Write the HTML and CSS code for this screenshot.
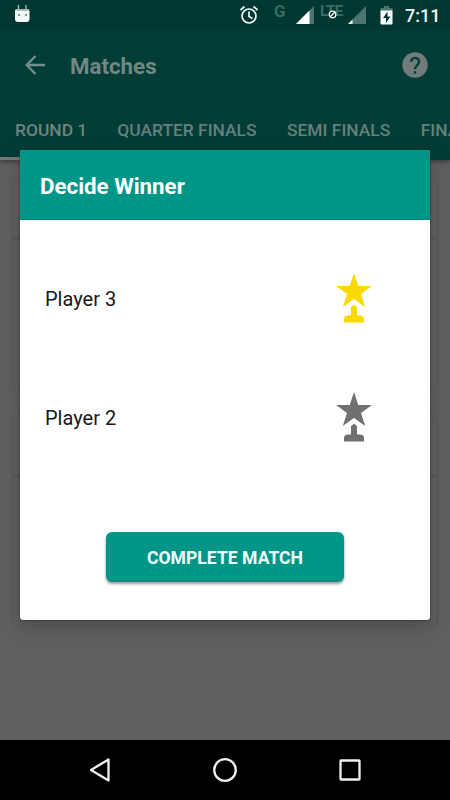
FILE: index.html
```html
<!DOCTYPE html>
<html lang="en">
<head>
<meta charset="utf-8">
<title>Matches</title>
<link rel="stylesheet" href="styles.css">
</head>
<body>
<div class="screen">
  <header class="top">
    <div class="status">
      <svg class="robot" width="16" height="18" viewBox="0 0 16 18"><path d="M4.500 0v4M12 0v4" stroke="#b5cbc8" stroke-width="1.200"/><path d="M1 6q0-2 2-2h10q2.500 0 2.500 2v8q0 3-3 3H4q-3 0-3-3z" fill="#f2fafa"/><path d="M2.500 4h12v2h-12z" fill="#a9bbb9"/><circle cx="5" cy="10" r="1.100" fill="#6b7c7a"/><circle cx="12" cy="10" r="1.100" fill="#6b7c7a"/></svg>
      <svg class="alarm" width="20" height="20" viewBox="0 0 20 20" fill="none" stroke="#eef7f6" stroke-width="1.700"><circle cx="10" cy="11" r="7"/><path d="M10 6.500v5l3.500 2M1.500 5l4-3.500M18.500 5l-4-3.500"/></svg>
      <span class="net net-g">G</span>
      <svg class="signal" width="20" height="19" viewBox="0 0 20 19"><path d="M19 0v18H1z" fill="#4b7570"/><path d="M14.500 4.500V18H1z" fill="#fff"/></svg>
      <span class="net net-lte">LTE<svg class="blocked" width="9" height="9" viewBox="0 0 9 9" fill="none" stroke="#fff" stroke-width="1.300"><circle cx="4.500" cy="4.500" r="3.300" fill="#003731"/><path d="M2.300 6.700l4.400-4.400"/></svg></span>
      <svg class="signal" width="20" height="19" viewBox="0 0 20 19"><path d="M19 0v18H1z" fill="#4b7570"/><path d="M5.500 13.500V18H1z" fill="#fff"/></svg>
      <svg class="battery" width="13" height="19" viewBox="0 0 13 19"><path d="M4 0h5v2h3.500v3H.5V2H4z" fill="#4b7570"/><path d="M.5 4.500h12v13q0 1-1 1h-10q-1 0-1-1z" fill="#fff"/><path d="M7.500 5.500L3 12h3v5l4.500-6.500h-3z" fill="#003731"/></svg>
      <time>7:11</time>
    </div>
    <div class="bar">
      <svg width="20" height="20" viewBox="0 0 20 20" fill="none" stroke="#738f8b" stroke-width="2.300"><path d="M20 10H2M10.500 1L1.600 10l8.900 9"/></svg>
      <h1>Matches</h1>
      <svg class="help" width="26" height="26" viewBox="0 0 26 26"><circle cx="13" cy="13" r="12.700" fill="#747c7b"/><path d="M9.200 9.800a3.900 3.900 0 1 1 6.600 2.800c-1.500 1.500-2.800 2.200-2.800 4.600" fill="none" stroke="#003d36" stroke-width="2.400"/><path d="M11.800 19.300h2.400v2.400h-2.400z" fill="#003d36"/></svg>
    </div>
    <nav class="tabs"><span class="active">ROUND 1</span><span>QUARTER FINALS</span><span>SEMI FINALS</span><span>FINALS</span></nav>
  </header>
  <main class="content">
    <section class="card"><div class="card-head"></div></section>
    <section class="card"><div class="card-head"></div></section>
  </main>
  <footer class="navbar">
    <svg width="22" height="26" viewBox="0 0 22 26"><path d="M2 13L19.500 2.500v21z"/></svg>
    <svg width="26" height="26" viewBox="0 0 26 26"><circle cx="13" cy="13" r="10.800"/></svg>
    <svg width="22" height="26" viewBox="0 0 22 26"><rect x="1.500" y="3.500" width="19" height="19" rx=".5"/></svg>
  </footer>
  <div class="dialog">
    <h2>Decide Winner</h2>
    <div class="players">
      <div class="player"><span>Player 3</span><svg class="trophy gold" width="36" height="50" viewBox="0 0 36 50"><path d="M18 0l4.300 13H36L25 21.100 29.200 34 18 26 6.800 34 11 21.100 0 13h13.700zM8 49.500V46q0-3.500 4-3.500h3V34l3-2.200 3 2.200v8.500h3q4 0 4 3.500v3.500z"/></svg></div>
      <div class="player"><span>Player 2</span><svg class="trophy" width="36" height="50" viewBox="0 0 36 50"><path d="M18 0l4.300 13H36L25 21.100 29.200 34 18 26 6.800 34 11 21.100 0 13h13.700zM8 49.500V46q0-3.500 4-3.500h3V34l3-2.200 3 2.200v8.500h3q4 0 4 3.500v3.500z"/></svg></div>
    </div>
    <button class="complete">COMPLETE MATCH</button>
  </div>
</div>
</body>
</html>
```
FILE: styles.css
```css
* { box-sizing: border-box; }
body { margin: 0; font-family: Roboto, "Liberation Sans", sans-serif; }
.screen { position: relative; display: flex; flex-direction: column; width: 450px; height: 800px; overflow: hidden; background: #606060; }
.top { display: flex; flex-direction: column; height: 160px; background: #003d36; box-shadow: 0 2px 5px rgba(0,0,0,.4); z-index: 1; }
.status { display: flex; align-items: flex-start; height: 30px; padding: 5px 11px 0 14px; background: #003731; color: #eef7f6; }
.robot { margin-right: auto; }
.net { font-size: 15px; font-weight: 700; line-height: 16px; color: #3b6a64; margin-top: -2px; }
.net-g { font-size: 17px; margin-left: 15px; width: 21px; }
.net-lte { position: relative; margin-left: 5px; width: 27px; font-size: 15.5px; letter-spacing: -.8px; }
.blocked { position: absolute; left: 8px; top: 7px; }
.signal { margin-top: 1px; }
.battery { margin: 1px 0 0 13px; }
time { margin-left: 12px; width: 34px; font-size: 18px; font-weight: 500; line-height: 22px; white-space: nowrap; }
.bar { display: flex; align-items: center; height: 70px; padding: 0 22px 0 25px; }
h1 { margin: 2px auto 0 25px; font-size: 22.3px; font-weight: 700; color: #738682; line-height: 30px; }
.help { display: block; }
.tabs { display: flex; gap: 30.5px; height: 60px; padding-left: 15px; overflow: hidden; font-size: 17.4px; font-weight: 500; line-height: 61px; color: #64807c; white-space: nowrap; }
.active { height: 60px; margin: 0 -15px; padding: 0 14.6px 0 15px; color: #71827f; border-bottom: 3px solid #777; }
.content { display: flex; flex-direction: column; gap: 25px; height: 580px; padding: 17px 12px; }
.card { height: 212px; border: 1px solid #585858; border-radius: 6px; background: #606060; }
.card-head { height: 61px; border-bottom: 1px solid #505050; }
.navbar { display: flex; align-items: center; justify-content: space-between; height: 60px; padding: 0 89px; background: #000; }
.navbar svg { fill: none; stroke: #f0f0f0; stroke-width: 2.3; stroke-linejoin: round; }
.dialog { position: absolute; z-index: 2; left: 20px; top: 150px; width: 410px; height: 470px; display: flex; flex-direction: column; align-items: center; overflow: hidden; border-radius: 3px; background: #fff; box-shadow: 0 0 1px rgba(0,0,0,.8), 0 8px 22px rgba(0,0,0,.2), 0 1px 3px rgba(0,0,0,.2); }
h2 { align-self: stretch; height: 70px; margin: 0; padding: 1px 20px 0; background: #009687; border-bottom: 1px solid #078375; color: #fff; font-size: 22.3px; font-weight: 700; line-height: 70px; }
.players { align-self: stretch; padding: 19px 58px 0 25px; }
.player { display: flex; align-items: center; justify-content: space-between; height: 119px; font-size: 20px; color: #181818; }
.trophy { margin-top: -2px; fill: #707070; }
.gold { fill: #f9d900; }
.complete { width: 238px; height: 50px; margin-top: 55px; padding: 2px 0 0; border: 0; border-radius: 6px; background: #009687; color: #effffd; font: 700 17.6px Roboto, "Liberation Sans", sans-serif; box-shadow: 0 2px 3px rgba(0,0,0,.4); }
```
